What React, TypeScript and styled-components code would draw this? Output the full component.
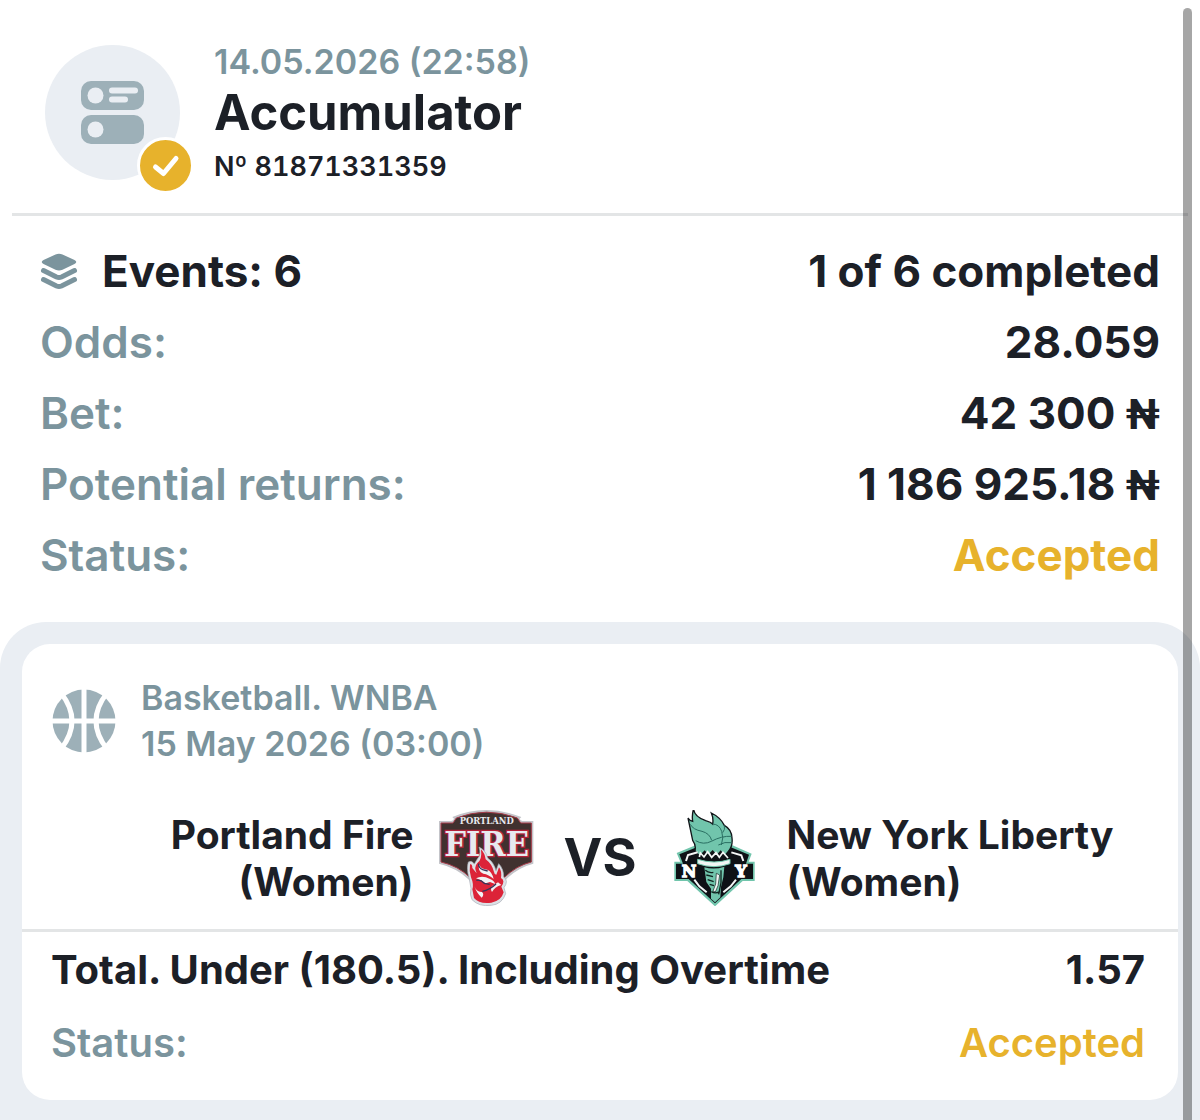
import React from "react";
import styled, { createGlobalStyle } from "styled-components";

const colors = {
  text: "#1c2027",
  muted: "#7b949d",
  icon: "#9db0b8",
  accent: "#e7b22c",
  panel: "#eaeef3",
  line: "#e3e5e6",
};

const GlobalStyle = createGlobalStyle`
  * {
    box-sizing: border-box;
  }

  body {
    margin: 0;
    background: #ffffff;
    color: ${colors.text};
    font-family: Inter, "Liberation Sans", sans-serif;
    overflow: hidden;
  }

  h1, h2, p, dl, dt, dd {
    margin: 0;
  }
`;

const Page = styled.main`
  display: flex;
  flex-direction: column;
  min-height: 100vh;
`;

const Header = styled.header`
  display: flex;
  gap: 34px;
  margin: 0 12px;
  padding: 40px 33px 21px;
  border-bottom: 3px solid ${colors.line};
`;

const Avatar = styled.div`
  position: relative;
  display: flex;
  align-items: center;
  justify-content: center;
  flex: none;
  width: 135px;
  height: 135px;
  margin-top: 5px;
  border-radius: 50%;
  background: ${colors.panel};
`;

const AvatarBadge = styled.span`
  position: absolute;
  right: -14px;
  bottom: -14px;
  display: flex;
  width: 57px;
  height: 57px;
  border: 3px solid #ffffff;
  border-radius: 50%;
  background: ${colors.accent};
`;

const HeaderText = styled.div`
  display: flex;
  flex-direction: column;
`;

const BetDate = styled.p`
  font-size: 34px;
  font-weight: 600;
  line-height: 44px;
  color: ${colors.muted};
`;

const BetTitle = styled.h1`
  font-size: 49px;
  font-weight: 700;
  line-height: 58px;
`;

const BetNumber = styled.p`
  font-size: 27px;
  font-weight: 600;
  font-variant-numeric: tabular-nums;
  line-height: 50px;
`;

const Summary = styled.dl`
  display: flex;
  flex-direction: column;
  padding: 20px 40px 31px;
`;

const SummaryRow = styled.div`
  display: flex;
  align-items: center;
  justify-content: space-between;
  font-size: 44px;
  line-height: 71px;
`;

const SummaryLabel = styled.dt<{ $strong?: boolean }>`
  display: flex;
  align-items: center;
  gap: 24px;
  font-weight: ${(props) => (props.$strong ? 700 : 600)};
  color: ${(props) => (props.$strong ? colors.text : colors.muted)};
`;

const SummaryValue = styled.dd<{ $accent?: boolean }>`
  font-weight: 700;
  color: ${(props) => (props.$accent ? colors.accent : colors.text)};
`;

const Currency = styled.span`
  font-family: Roboto, "Liberation Sans", sans-serif;
  font-size: 42px;
  font-weight: 700;
  line-height: 1;
`;

const EventsPanel = styled.section`
  flex: 1;
  padding: 22px 22px 20px;
  border-radius: 46px 46px 0 0;
  background: ${colors.panel};
`;

const EventCard = styled.article`
  border-radius: 28px;
  background: #ffffff;
`;

const EventHeader = styled.div`
  display: flex;
  align-items: center;
  gap: 25px;
  padding: 31px 30px 0;
`;

const EventInfo = styled.p`
  font-size: 34px;
  font-weight: 600;
  line-height: 46px;
  color: ${colors.muted};
`;

const Teams = styled.div`
  display: grid;
  grid-template-columns: 1fr auto 1fr;
  align-items: center;
  gap: 30px;
  padding: 43px 30px 23px;
  border-bottom: 3px solid ${colors.line};
`;

const Team = styled.div<{ $side: "home" | "away" }>`
  display: flex;
  align-items: center;
  justify-content: flex-end;
  flex-direction: ${(props) => (props.$side === "home" ? "row" : "row-reverse")};
  gap: 24px;
  text-align: ${(props) => (props.$side === "home" ? "right" : "left")};
`;

const TeamName = styled.h2`
  font-size: 39px;
  font-weight: 700;
  line-height: 47px;
`;

const Versus = styled.span`
  font-size: 52px;
  font-weight: 700;
  line-height: 56px;
`;

const Outcome = styled.dl`
  padding: 1px 33px 21px 29px;
`;

const OutcomeRow = styled.div`
  display: flex;
  justify-content: space-between;
  font-size: 40px;
  line-height: 73px;
`;

const OutcomeLabel = styled.dt<{ $muted?: boolean }>`
  font-weight: ${(props) => (props.$muted ? 600 : 700)};
  color: ${(props) => (props.$muted ? colors.muted : colors.text)};
`;

const OutcomeValue = styled.dd<{ $accent?: boolean }>`
  font-weight: ${(props) => (props.$accent ? 600 : 700)};
  color: ${(props) => (props.$accent ? colors.accent : colors.text)};
`;

// overlay thumb, floats above the content like the native mobile one
const ScrollThumb = styled.div`
  position: fixed;
  top: 8px;
  right: 8px;
  bottom: -8px;
  width: 9px;
  border-radius: 5px;
  background: rgba(0, 0, 0, 0.35);
`;

const SlipIcon = () => (
  <svg width="63" height="63" viewBox="0 0 63 63" aria-hidden="true">
    <rect width="63" height="29" rx="10" fill={colors.icon} />
    <rect y="34" width="63" height="29" rx="10" fill={colors.icon} />
    <g fill={colors.panel}>
      <circle cx="14.500" cy="14.500" r="8" />
      <circle cx="14.500" cy="48.500" r="8" />
      <rect x="28" y="6.500" width="29" height="6" rx="3" />
      <rect x="28" y="15.500" width="19" height="6" rx="3" />
    </g>
  </svg>
);

const CheckIcon = () => (
  <svg width="51" height="51" viewBox="0 0 51 51" aria-hidden="true">
    <path
      d="M15.500 27 23.500 33.500 36 18.500"
      fill="none"
      stroke="#ffffff"
      strokeWidth="5"
      strokeLinecap="round"
      strokeLinejoin="round"
    />
  </svg>
);

const LayersIcon = () => (
  <svg width="38" height="38" viewBox="0 0 38 38" aria-hidden="true">
    <path
      d="M15.500 1.600Q19 0 22.500 1.600L34.500 7Q38 9 34.500 11L22.500 16.800Q19 18.400 15.500 16.800L3.500 11Q0 9 3.500 7Z"
      fill={colors.muted}
    />
    <path
      d="M3.500 17.500 16.500 24Q19 25 21.500 24L34.500 17.500M3.500 26.500 16.500 33Q19 34 21.500 33L34.500 26.500"
      fill="none"
      stroke={colors.muted}
      strokeWidth="5"
      strokeLinecap="round"
    />
  </svg>
);

const BasketballIcon = () => (
  <svg width="64" height="64" viewBox="0 0 64 64" aria-hidden="true">
    <circle cx="32" cy="32" r="31.500" fill={colors.icon} />
    <path
      d="M0 32H64M32 0V64M9 4Q31 32 9 60M55 4Q33 32 55 60"
      fill="none"
      stroke="#ffffff"
      strokeWidth="5"
    />
  </svg>
);

const FireLogo = () => (
  <svg width="96" height="96" viewBox="51 45 288 288" role="img" aria-label="Portland Fire">
    <path
      d="M54 78H91Q98 77 99 71L94 66Q194 24 301 66L296 71Q298 77 304 78H337V206Q290 218 254 254L196 300 144 254Q106 218 54 206Z"
      fill="#c3c4c9"
    />
    <path
      d="M60 84H96L106 69Q196 34 289 69L299 84H331V201Q286 212 248 249H149Q111 212 60 201Z"
      fill="#40312f"
      stroke="#a63a48"
      strokeWidth="3"
    />
    <text
      x="197"
      y="88"
      textAnchor="middle"
      fontFamily="DejaVu Serif Condensed, DejaVu Serif, serif"
      fontWeight="700"
      fontSize="28"
      fill="#e8eaee"
    >
      PORTLAND
    </text>
    <text
      x="197"
      y="184"
      textAnchor="middle"
      fontFamily="DejaVu Serif Condensed, DejaVu Serif, serif"
      fontWeight="700"
      fontSize="102"
      fill="#e7eaef"
      stroke="#b3223a"
      strokeWidth="8"
      paintOrder="stroke"
    >
      FIRE
    </text>
    <path
      d="M174 156Q195 166 200 189Q219 203 225 227L233 206Q248 221 248 246Q264 257 249 278L254 296Q243 328 211 331Q174 336 153 314Q145 298 150 280L144 248Q136 221 142 201Q153 195 160 207L169 192Q182 180 174 156Z"
      fill="#dce1e6"
      stroke="#a9aeb7"
      strokeWidth="2"
    />
    <path
      d="M180 163Q191 174 194 193Q213 207 219 231Q220 239 226 239L234 217Q243 228 240 249Q254 257 241 275L248 292Q241 318 211 323Q175 328 159 309L154 283Q159 268 150 247Q144 226 147 208Q154 206 154 219L167 235Q158 216 169 204Q184 195 180 163Z"
      fill="#dc2338"
    />
    <path
      d="M175 208Q177 222 199 224Q213 230 218 252Q203 238 187 236Q169 231 175 208M165 250Q184 240 207 252Q221 258 222 267L207 261 194 265 179 255ZM160 274Q168 293 183 291Q191 299 182 308Q168 296 160 274ZM231 262 241 270Q222 275 213 291Q207 282 213 274Z"
      fill="#f1f2f5"
    />
    <path
      d="M173 206Q172 219 185 224L200 228M166 256Q179 253 190 265L206 268M184 289Q206 285 225 267"
      fill="none"
      stroke="#34355a"
      strokeWidth="4"
    />
  </svg>
);

const LibertyLogo = () => (
  <svg width="96" height="96" viewBox="18 45 288 288" role="img" aria-label="New York Liberty">
    <path d="M50 174 110 149H214L275 176 266 200H284V258H248L165 334 82 258H43V200H61Z" fill="#71c5ac" />
    <path d="M58 178 114 155H209L267 179 258 206H279V252H244L165 325 86 252H48V206H69Z" fill="#0e1116" />
    <path
      d="M101 41Q101 64 137 77Q153 82 158 87Q161 70 154 54Q181 67 193 91Q215 103 216 129Q219 153 205 169L194 183 182 169 170 182 158 168 145 181 134 169 119 184 105 167Q109 151 98 136L84 69Q89 77 98 79Q95 59 101 41Z"
      fill="#71c5ac"
      stroke="#111519"
      strokeWidth="4"
    />
    <path
      d="M91 88Q99 104 126 109Q149 115 155 136M107 137Q130 151 154 139Q185 122 215 124M158 87Q178 88 185 109Q192 127 184 150M193 91Q196 104 188 113M175 150Q194 139 216 143"
      fill="none"
      stroke="#2a6f62"
      strokeWidth="3"
    />
    <path
      d="M78 198 84 180 113 172M214 172 244 181 250 198M103 254 118 274 140 292M190 292 212 274 228 254"
      fill="none"
      stroke="#f5f7f7"
      strokeWidth="6"
    />
    <path
      d="M118 186 121 174 132 186 143 170 155 187 168 173 178 187 189 172 204 189"
      fill="none"
      stroke="#f5f7f7"
      strokeWidth="5"
    />
    <path d="M113 193Q163 209 210 193V206Q162 224 113 206Z" fill="#f2f6f5" stroke="#71c5ac" strokeWidth="3" />
    <path d="M133 217Q163 225 193 215L190 247 183 276 181 307 165 322 153 311 153 281 139 261Z" fill="#71c5ac" />
    <path
      d="M136 226Q146 235 160 232M139 240 159 245M143 254 161 260M149 268 162 272M183 226V263L176 298M154 290Q166 297 180 290"
      fill="none"
      stroke="#10231f"
      strokeWidth="4"
    />
    <path
      d="M169 235 179 240 174 272 166 291 159 288 167 267Z"
      fill="#f2f6f5"
      stroke="#10231f"
      strokeWidth="2"
    />
    <g
      fontFamily="DejaVu Serif, serif"
      fontWeight="700"
      fontSize="48"
      fill="#ffffff"
      stroke="#ffffff"
      strokeWidth="4"
      textAnchor="middle"
    >
      <text x="87" y="246">N</text>
      <text x="243" y="246">Y</text>
    </g>
  </svg>
);

interface AmountProps {
  value: string;
}

const Amount = ({ value }: AmountProps) => (
  <>
    {value} <Currency>₦</Currency>
  </>
);

const App = () => (
  <>
    <GlobalStyle />
    <Page>
      <Header>
        <Avatar>
          <SlipIcon />
          <AvatarBadge>
            <CheckIcon />
          </AvatarBadge>
        </Avatar>
        <HeaderText>
          <BetDate>14.05.2026 (22:58)</BetDate>
          <BetTitle>Accumulator</BetTitle>
          <BetNumber>Nº 81871331359</BetNumber>
        </HeaderText>
      </Header>

      <Summary>
        <SummaryRow>
          <SummaryLabel $strong>
            <LayersIcon />
            Events: 6
          </SummaryLabel>
          <SummaryValue>1 of 6 completed</SummaryValue>
        </SummaryRow>
        <SummaryRow>
          <SummaryLabel>Odds:</SummaryLabel>
          <SummaryValue>28.059</SummaryValue>
        </SummaryRow>
        <SummaryRow>
          <SummaryLabel>Bet:</SummaryLabel>
          <SummaryValue>
            <Amount value="42 300" />
          </SummaryValue>
        </SummaryRow>
        <SummaryRow>
          <SummaryLabel>Potential returns:</SummaryLabel>
          <SummaryValue>
            <Amount value="1 186 925.18" />
          </SummaryValue>
        </SummaryRow>
        <SummaryRow>
          <SummaryLabel>Status:</SummaryLabel>
          <SummaryValue $accent>Accepted</SummaryValue>
        </SummaryRow>
      </Summary>

      <EventsPanel>
        <EventCard>
          <EventHeader>
            <BasketballIcon />
            <EventInfo>
              Basketball. WNBA
              <br />
              15 May 2026 (03:00)
            </EventInfo>
          </EventHeader>
          <Teams>
            <Team $side="home">
              <TeamName>
                Portland Fire
                <br />
                (Women)
              </TeamName>
              <FireLogo />
            </Team>
            <Versus>VS</Versus>
            <Team $side="away">
              <TeamName>
                New York Liberty
                <br />
                (Women)
              </TeamName>
              <LibertyLogo />
            </Team>
          </Teams>
          <Outcome>
            <OutcomeRow>
              <OutcomeLabel>Total. Under (180.5). Including Overtime</OutcomeLabel>
              <OutcomeValue>1.57</OutcomeValue>
            </OutcomeRow>
            <OutcomeRow>
              <OutcomeLabel $muted>Status:</OutcomeLabel>
              <OutcomeValue $accent>Accepted</OutcomeValue>
            </OutcomeRow>
          </Outcome>
        </EventCard>
      </EventsPanel>
    </Page>
    <ScrollThumb />
  </>
);

export default App;
